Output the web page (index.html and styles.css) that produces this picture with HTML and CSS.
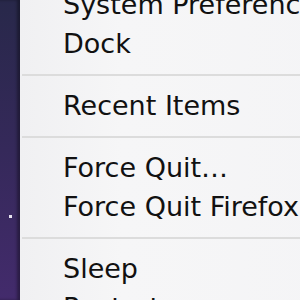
FILE: index.html
```html
<!DOCTYPE html>
<html lang="en">
<head>
  <title>Apple Menu</title>
  <link rel="stylesheet" href="styles.css">
</head>
<body>

<div class="screen">
  <div class="desktop">
    <span class="star"></span>
  </div>
  <ul class="menu">
    <li class="item">System Preferences…</li>
    <li class="item">Dock</li>
    <li class="sep"></li>
    <li class="item">Recent Items</li>
    <li class="sep"></li>
    <li class="item">Force Quit…</li>
    <li class="item">Force Quit Firefox</li>
    <li class="sep"></li>
    <li class="item">Sleep</li>
    <li class="item">Restart…</li>
  </ul>
</div>

</body>
</html>
```

FILE: styles.css
```css
body {
  margin: 0;
  font-family: "DejaVu Sans", sans-serif;
  overflow: hidden;
}
.screen {
  display: flex;
  width: 300px;
  height: 300px;
  overflow: hidden;
}
.desktop {
  position: relative;
  width: 20px;
  flex-shrink: 0;
  background: linear-gradient(to bottom, #28284a, #35295a 50%, #432b6c);
  box-shadow: inset -3px 0 3px rgba(0, 0, 0, 0.35);
}
.star {
  position: absolute;
  left: 9px;
  top: 215px;
  width: 3px;
  height: 3px;
  background: #e8e4f0;
}
.menu {
  flex: 1;
  list-style: none;
  margin: -15px 0 0;
  padding: 0;
  background: linear-gradient(to right, #f0f0f2, #f6f6f7 30%, #f4f4f6);
  white-space: nowrap;
}
.item {
  padding-left: 43px;
  font-size: 27px;
  line-height: 39px;
  color: #111;
}
.sep {
  height: 2px;
  margin: 11px 0 10px 2px;
  background: #dcdcdc;
}
```
